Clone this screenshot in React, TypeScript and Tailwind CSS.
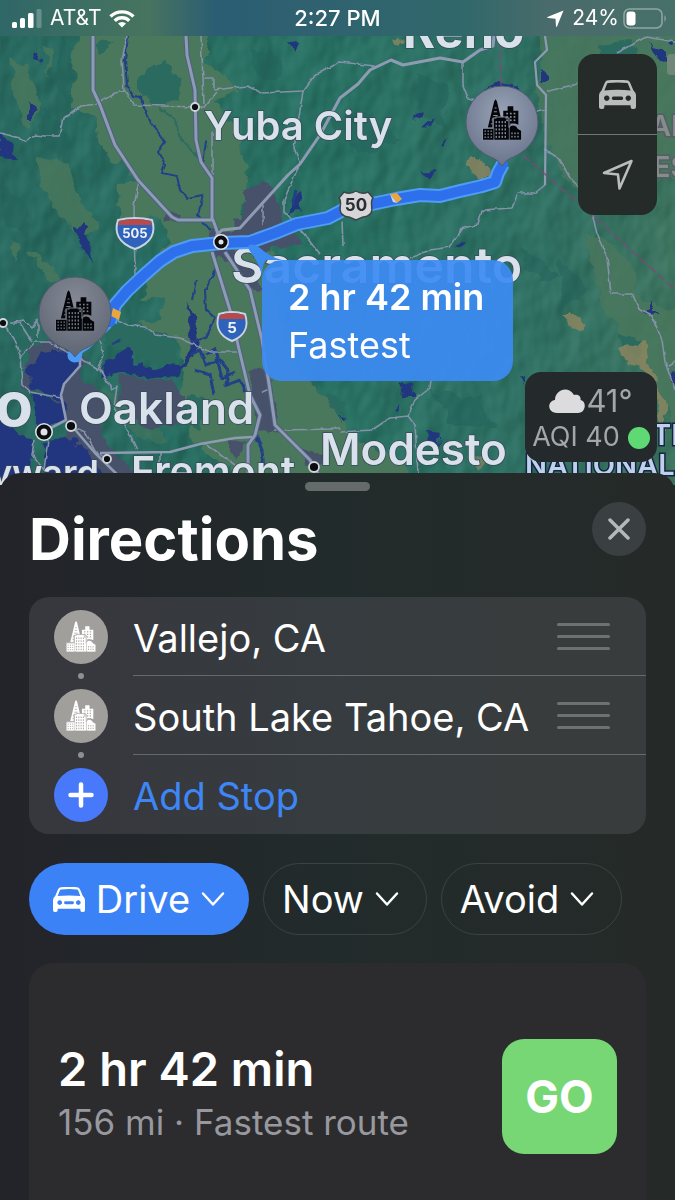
import React from "react";

type IconProps = { className?: string };

const WINDOWS: [number, number, number, number][] = [];
for (let r = 0; r < 5; r++) for (let c = 0; c < 4; c++) WINDOWS.push([39 + c * 9, 63 + r * 11, 4, 6]);
for (let r = 0; r < 3; r++) for (let c = 0; c < 3; c++) WINDOWS.push([6 + c * 9, 91 + r * 9, 4, 4]);
for (let r = 0; r < 2; r++) for (let c = 0; c < 3; c++) WINDOWS.push([86 + c * 9, 97 + r * 10, 4, 5]);
for (let r = 0; r < 3; r++) for (let c = 0; c < 3; c++) WINDOWS.push([71 + c * 11, 38 + r * 10, 5, 5]);

function CityShapes({ ink, gap }: { ink: string; gap: string }) {
  return (
    <g>
      <path d="M35 4 L39 -2 L43 4 L55 54 L30 54 L30 82 L16 82 Z" fill={ink} />
      <path d="M36 24h6M34 35h9M32 46h13M27 60h4M25 71h5" stroke={gap} strokeWidth="3" />
      <path d="M62 32h13V19h17v13h15v42l-10-4h-14v12h-21z" fill={ink} />
      <path d="M0 84h32V54h8v-3h30v3h9v28c5-12 24-9 27 3l11 6v29H0z" fill={ink} stroke={gap} strokeWidth="3" />
      <path d="M34 84v36M80 80v40" stroke={gap} strokeWidth="2" />
      {WINDOWS.map(([x, y, w, h], i) => (
        <rect key={i} x={x} y={y} width={w} height={h} fill={gap} />
      ))}
    </g>
  );
}

function Car({ className }: IconProps) {
  return (
    <svg viewBox="0 0 110 86" className={className} fill="currentColor" fillRule="evenodd" aria-hidden="true">
      <path d="M26 1 Q55 -3 84 1 Q90 2 93 9 L102 30 Q110 37 110 46 V80 Q110 86 104 86 H100 Q94 86 94 80 V75 H16 V80 Q16 86 10 86 H6 Q0 86 0 80 V46 Q0 37 8 30 L17 9 Q20 2 26 1Z M28 9 Q24 9 23 13 L16 31 Q55 27 94 31 L87 13 Q86 9 82 9 Q55 5 28 9Z M23 46 a8 8 0 1 0 .1 0Z M87 46 a8 8 0 1 0 .1 0Z M43 49 Q38 49 38 54 Q38 59 43 59 H67 Q72 59 72 54 Q72 49 67 49Z" />
    </svg>
  );
}

function Chevron() {
  return (
    <svg viewBox="0 0 24 16" className="h-4 w-6" fill="none" stroke="currentColor" strokeWidth="2.500" strokeLinecap="round" strokeLinejoin="round" aria-hidden="true">
      <path d="M2 2.500 L12 13.500 L22 2.500" />
    </svg>
  );
}

function Pin({ x, y, id, gap }: { x: number; y: number; id: string; gap: string }) {
  return (
    <g transform={`translate(${x} ${y})`}>
      <path d="M-36 0 A36 36 0 1 1 36 0 C36 19 22 31 9 36 Q4 38 0 44 Q-4 38 -9 36 C-22 31 -36 19 -36 0Z" fill={`url(#${id})`} stroke="#4f5b70" strokeWidth="1" />
      <g transform="translate(-19.500 -22) scale(0.335)">
        <CityShapes ink="#050609" gap={gap} />
      </g>
    </g>
  );
}

function Town({ x, y, r }: { x: number; y: number; r: number }) {
  return <circle cx={x} cy={y} r={r} fill="#0b0d10" stroke="#cfd5d8" strokeWidth="1.800" />;
}

const ROUTE =
  "M110 322 L115 305 L127 291 L143 276 L160 261 L174 252 L192 246 L221 243 L250 242 L275 233 L297 224 L328 218 L345 209 L372 204 L396 199 L420 195 L440 196 L460 191 L482 186 L495 182 L498 173 L503 164";

function MapDrawing() {
  return (
    <svg viewBox="0 0 675 485" preserveAspectRatio="xMidYMin slice" className="absolute inset-0 h-full w-full" role="img" aria-label="Map of the route from Vallejo to South Lake Tahoe" fontFamily="Inter, 'Liberation Sans', sans-serif">
      <defs>
        <filter id="edge" x="-5%" y="-5%" width="110%" height="110%">
          <feTurbulence type="fractalNoise" baseFrequency="0.06" numOctaves="3" seed="4" result="n" />
          <feDisplacementMap in="SourceGraphic" in2="n" scale="15" xChannelSelector="R" yChannelSelector="G" />
        </filter>
        <filter id="wobble" x="-5%" y="-5%" width="110%" height="110%">
          <feTurbulence type="fractalNoise" baseFrequency="0.12" numOctaves="2" seed="9" result="n" />
          <feDisplacementMap in="SourceGraphic" in2="n" scale="4" xChannelSelector="R" yChannelSelector="G" />
        </filter>
        <filter id="relief" x="0" y="0" width="100%" height="100%" colorInterpolationFilters="sRGB">
          <feTurbulence type="fractalNoise" baseFrequency="0.03 0.02" numOctaves="3" seed="12" />
          <feDiffuseLighting surfaceScale="6" lightingColor="#ffffff">
            <feDistantLight azimuth="220" elevation="28" />
          </feDiffuseLighting>
        </filter>
        <linearGradient id="land" x1="0" x2="1">
          <stop offset="0" stopColor="#296a60" />
          <stop offset="0.5" stopColor="#297264" />
          <stop offset="0.8" stopColor="#307164" />
          <stop offset="1" stopColor="#3d7560" />
        </linearGradient>
        <radialGradient id="pinA" cx="0.5" cy="0.3" r="0.7">
          <stop offset="0" stopColor="#848995" />
          <stop offset="1" stopColor="#5f6673" />
        </radialGradient>
        <radialGradient id="pinB" cx="0.5" cy="0.35" r="0.7">
          <stop offset="0" stopColor="#9aa4b8" />
          <stop offset="1" stopColor="#667087" />
        </radialGradient>
      </defs>

      <rect width="675" height="485" fill="url(#land)" />
      <rect width="675" height="485" filter="url(#relief)" style={{ mixBlendMode: "soft-light" }} opacity="0.25" />

      <g filter="url(#edge)">
        <g fill="#4a785c">
          <path d="M78 20 L75 70 L73 108 L95 117 L101 145 L112 164 L126 158 L136 180 L116 184 L120 218 L146 224 L150 214 L162 220 L170 240 L158 262 L145 285 L140 300 L165 296 L160 320 L135 324 L180 345 L185 372 L180 395 L190 440 L250 480 L420 485 L392 455 L350 440 L338 405 L300 375 L278 315 L276 262 L240 215 L246 195 L250 168 L238 157 L241 140 L226 118 L216 100 L234 92 L228 76 L204 62 L214 20Z" />
          <path d="M545 20 L535 90 L548 145 L575 190 L590 200 L595 175 L680 180 L680 20Z" fillOpacity="0.8" />
          <path d="M588 230 L630 260 L640 300 L680 310 L680 430 L660 400 L625 340 L600 300Z" fillOpacity="0.8" />
          <path d="M8 60 L25 62 L40 100 L30 130 L20 120Z M35 155 L68 165 L80 200 L98 225 L85 240 L60 215 L40 185Z M30 250 L48 262 L62 285 L50 282Z M10 240 L20 250 L14 260Z M44 45 L52 50 L50 80Z" fillOpacity="0.8" />
          <path d="M100 385 L130 400 L170 440 L140 440Z M85 440 L110 470 L80 455Z" fillOpacity="0.5" />
        </g>
        <g fill="#2a6b5f">
          <path d="M142 72 L165 58 L180 82 L177 102 L155 104 L138 90Z M96 45 L112 42 L106 54 L96 54Z" />
          <path d="M108 325 L140 328 L165 332 L180 345 L172 365 L140 355 L105 345Z" />
          <path d="M190 395 L212 400 L200 430 L175 425Z M325 390 L345 400 L340 425Z" />
          <path d="M600 60 L620 75 L640 58 L630 42 L600 46Z M620 330 L640 345 L635 360 L622 345Z" />
        </g>
        <g fill="#245f5a" fillOpacity="0.5">
          <path d="M45 110 L70 140 L60 160 L40 140Z M0 180 L22 200 L30 235 L8 225Z M60 40 L75 50 L66 100 L55 80Z" />
          <path d="M250 45 L285 60 L275 85 L255 75Z M330 120 L370 112 L400 140 L360 155Z M420 70 L450 90 L440 130 L415 110Z M380 300 L400 330 L390 370Z M560 260 L590 290 L560 310Z M520 250 L560 275 L540 285Z M430 390 L480 400 L500 430 L450 420Z" />
        </g>
        <g fill="#47516a">
          <path d="M245 190 L262 178 L275 192 L280 215 L300 240 L280 250 L250 250 L234 242 L232 222 L245 215Z" />
          <path d="M165 214 L180 216 L178 226 L166 222Z M212 228 L235 232 L236 262 L215 258Z M232 255 L255 262 L262 290 L246 285Z" />
          <path d="M120 375 L170 380 L186 395 L182 420 L150 430 L118 400Z M30 345 L60 340 L85 355 L80 380 L110 400 L100 440 L140 480 L100 485 L68 440 L60 400 L25 388Z" />
          <path d="M250 370 L268 375 L272 395 L280 430 L260 432Z M228 440 L245 442 L240 458 L228 455Z M300 445 L325 455 L320 475 L300 462Z" />
        </g>
        <g fill="#94875f">
          <path d="M466 165 L475 156 L485 164 L490 176 L478 178Z M562 313 L572 313 L588 323 L584 331 L568 327Z M618 350 L645 342 L648 365 L665 400 L665 440 L652 385 L640 372Z M395 36 L405 40 L398 46Z" fillOpacity="0.75" />
          <path d="M470 450 L485 462 L480 470Z" fillOpacity="0.6" />
        </g>
      </g>

      <g filter="url(#edge)" fill="#20367f">
        <path d="M40 352 L66 350 L82 362 L64 382 L62 398 L45 394 L34 390 L28 370Z M32 395 L62 400 L66 418 L40 430Z M-10 405 L14 430 L34 440 L30 468 L52 500 L-10 500Z M48 440 L68 438 L90 452 L112 500 L42 500Z" />
        <path d="M100 368 L118 358 L126 346 L134 352 L132 364 L155 368 L168 364 L180 366 L192 346 L186 320 L190 300 L196 322 L198 345 L190 362 L178 378 L150 376 L120 372 L104 378Z" />
        <path d="M73 225 L82 222 L88 240 L94 262 L82 248Z M27 102 L33 102 L32 120 L27 120Z M0 132 L12 150 L20 158 L0 156Z M34 54 L40 56 L38 66 L33 62Z M288 37 L302 40 L294 50Z M294 194 L300 192 L304 210 L290 214Z" />
        <path d="M486 88 L498 80 L514 82 L518 90Z M538 68 L546 72 L546 86 L538 84Z M650 44 L665 52 L672 64 L660 60Z M668 38 L675 40 L672 44Z M412 116 L424 110 L420 118Z M425 126 L434 120 L430 128Z M440 145 L450 138 L446 146Z M420 172 L436 170 L428 176Z" />
        <path d="M398 382 L412 386 L416 396 L404 396Z M428 430 L438 432 L440 448 L430 440Z M455 248 L466 242 L462 250Z M646 312 L654 302 L654 314Z M392 410 L398 406 L396 414Z M338 418 L348 418 L344 422Z M521 378 L526 376 L526 384Z M668 374 L680 372 L676 384Z" />
      </g>

      <g fill="none" stroke="#223f88" strokeWidth="2" filter="url(#wobble)">
        <path d="M128 36 L125 60 L127 85 L133 96 L141 97 L143 108 L150 122 L158 132 L165 142 L158 152 L165 165 L162 173 L177 176 L180 190 L187 198 L203 195 L198 215 L210 230" />
        <path d="M206 140 L203 165 M196 280 L192 300 M216 262 L214 275 L205 290 L206 310 L215 318 L206 338 L190 342" />
        <path d="M190 355 L200 350 L205 365 L220 360 L228 370 L226 385 L240 380 L246 392 M195 370 L210 375 L214 395 M205 355 L215 350 L222 378 L235 372 M256 435 L262 450 L264 470 M112 345 L120 340 M296 190 L292 205" strokeWidth="3" />
        <path d="M160 108 L175 120 L180 138 L200 160" stroke="#2e6b61" />
      </g>

      <g fill="none" stroke="#8491a8" strokeWidth="1.600" strokeLinejoin="round" filter="url(#wobble)">
        <path d="M127 36 L122 60 L124 90 L134 105 L195 107 L205 107 L217 92" />
        <path d="M0 133 L20 138 L27 142 L35 135 L45 136 L60 136 L64 118 L80 106 L97 104 L115 93 L125 91" />
        <path d="M201 36 L203 78 L204 104 M203 78 L214 78 L214 90 L247 86 L262 93 L303 91 L314 76 L340 62 L375 66" />
        <path d="M303 91 L300 110 L294 148 L300 163 L284 200 L284 212 L305 235 L320 255 M263 205 L263 225 M212 130 L212 180" />
        <path d="M463 62 L463 85 L468 98 L476 100 M342 222 L343 245 M536 112 L546 110" />
        <path d="M546 92 L560 88 L578 84 M616 53 L646 37 L675 42 M545 150 L560 160 L570 178 L580 188" />
        <path d="M592 212 L597 235 L607 257 L611 294 L632 294 L640 310 L652 316 L662 340 L665 362 L675 390 M668 366 L675 362" />
        <path d="M545 185 L535 193 L518 193 L512 208 L482 210 L478 225 L463 228 L450 247 L430 250 L410 258" />
        <path d="M431 380 L430 388 L415 400 L408 416 L390 418 L372 430 L340 432 M408 416 L415 425 L418 473" />
        <path d="M139 180 L134 205 L135 280 M80 358 L100 370 L112 390 L117 386 L114 408 L125 425 L137 450 M100 340 L104 355 L98 370" />
        <path d="M3 323 L15 340 L20 355 L22 385 L30 392 L62 398 M20 358 L35 342 L50 342 L72 355 M10 323 L20 323 L32 342 M14 322 L24 320 L32 328 L38 320 L38 338" />
        <path d="M72 426 L85 432 L95 450 L107 460 M275 430 L340 429 M205 443 L235 465 M160 452 L160 473 M34 440 L32 455 L44 470 L48 440 M262 392 L272 388 M118 320 L128 325 L145 327 L155 335 L180 338 L210 352 L240 352" />
      </g>
      <g fill="none" stroke="#4f6182" strokeWidth="5" strokeLinejoin="round">
        <path d="M93 36 L93 90 L100 105 L115 145 L138 180 L172 217 L178 220 L213 220 L221 242 M186 36 L187 55 L195 90 L196 140 L201 162 L212 178 L212 220 M212 252 L230 310 L238 345 L250 395 L260 415 L255 435 L248 445 L248 476 M225 252 L250 290 L262 340 L270 390 L275 425 L310 460 L325 485" />
      </g>
      <g fill="none" stroke="#8f9bb3" strokeWidth="3" strokeLinejoin="round">
        <path d="M93 36 L93 90 L100 105 L115 145 L138 180 L172 217 L178 220 L213 220 L221 242" />
        <path d="M186 36 L187 55 L195 90 L196 140 L201 162 L212 178 L212 220" />
        <path d="M494 36 L493 46 L480 50 L463 62 L440 58 L403 65 L391 60 L370 70 L358 84 L340 98 L320 135 L300 164 L288 175 L240 228 L222 230 L216 236" />
        <path d="M545 36 L547 50 L535 62 L537 85 L546 95 L545 185" strokeWidth="2.200" />
        <path d="M212 252 L230 310 L238 345 L250 395 L260 415 L255 435 L248 445 L248 476 M225 252 L250 290 L262 340 L270 390 L275 425 L310 460 L325 485" />
        <path d="M80 356 L80 366 L64 384 L61 395 L66 420 L45 431 M72 426 L95 453 L128 485 M100 453 L170 452 L200 444 L235 438 L252 437" strokeWidth="2.600" />
      </g>
      <g fill="none" stroke="#7a4a72" strokeWidth="2" strokeOpacity="0.7" strokeDasharray="9 3">
        <path d="M500 40 L501 90 M523 155 L578 203 L620 240 L675 290" />
      </g>

      <g fill="#d9e1ea" stroke="#37475c" strokeWidth="1.500" paintOrder="stroke" fontWeight="600">
        <text x="403" y="48" fontSize="49" fontWeight="700">Reno</text>
        <text x="204" y="140" fontSize="40">Yuba City</text>
        <text x="231" y="283" fontSize="50">Sacramento</text>
        <text x="79" y="424" fontSize="44">Oakland</text>
        <text x="320" y="465" fontSize="44">Modesto</text>
        <text x="131" y="486" fontSize="41">Fremont</text>
        <text x="99" y="486" fontSize="36" textAnchor="end">Hayward</text>
        <text x="33" y="426" fontSize="62" fontWeight="700" textAnchor="end">San Francisco</text>
      </g>
      <g fontSize="29" fontWeight="600" strokeWidth="3" paintOrder="stroke">
        <g fill="#858c8a" stroke="#565c68">
          <rect x="667" y="54" width="14" height="21" rx="4" stroke="none" fill="#71877a" />
          <text x="650" y="136">AL</text>
          <text x="653" y="177">ES</text>
        </g>
        <g fill="#bfd0ee" stroke="#14243f">
          <text x="652" y="445">TI</text>
          <text x="525" y="475">NATIONAL</text>
        </g>
      </g>

      <g fill="none" strokeLinejoin="round" strokeLinecap="round">
        <path d="M72 352 Q69 358 75 359 Q79 359 79 351 L88 345 L108 326 L115 308" stroke="#4a9af5" strokeWidth="7" />
        <path d={ROUTE} stroke="#4f9df7" strokeWidth="14" strokeLinecap="butt" />
        <path d={ROUTE} stroke="#2e70ec" strokeWidth="10" />
      </g>
      <path d="M113 308 L121 312 L119 320 L111 316Z M390 194 L397 193 L402 199 L397 203Z" fill="#e8a63e" />
      <path d="M390 194 L397 203 L393 202Z" fill="#d6dbe6" />

      <Town x={195} y={107} r={4} />
      <Town x={3} y={323} r={4} />
      <Town x={71} y={426} r={5} />
      <Town x={107} y={459} r={4} />
      <Town x={314} y={467} r={5} />
      <g>
        <circle cx="221" cy="242" r="8" fill="#dfe3e6" />
        <circle cx="221" cy="242" r="4.500" fill="none" stroke="#0b0d10" strokeWidth="4" />
        <circle cx="44" cy="432" r="9" fill="#dfe3e6" />
        <circle cx="44" cy="432" r="5.500" fill="none" stroke="#0b0d10" strokeWidth="4" />
      </g>

      <g textAnchor="middle" fontWeight="700">
        <path d="M118 220 Q135 216 152 220 C156 232 152 243 135 249 C118 243 114 232 118 220Z" fill="#2f62ba" stroke="#c9d3e3" strokeWidth="2" />
        <path d="M119 221 Q135 217 151 221 L152 225 H118Z" fill="#b94a4a" />
        <text x="135" y="238" fontSize="13" fill="#eef2f8">505</text>
        <path d="M219 314 Q232 310 245 314 C249 326 245 336 232 341 C219 336 215 326 219 314Z" fill="#2f62ba" stroke="#c9d3e3" strokeWidth="2" />
        <path d="M220 315 Q232 311 244 315 L245 319 H219Z" fill="#b94a4a" />
        <text x="232" y="333" fontSize="15" fill="#eef2f8">5</text>
        <path d="M344 192 Q350 195 356 191 Q362 195 368 192 L373 198 C369 203 374 208 371 213 Q368 217 363 217 L356 220 L349 217 Q344 217 341 213 C338 208 343 203 339 198Z" fill="#d6d6d8" stroke="#3c4449" strokeWidth="1.500" />
        <text x="356" y="211" fontSize="17" fill="#2b2d33">50</text>
      </g>

      <Pin x={75} y={313} id="pinA" gap="#777d89" />
      <Pin x={502} y={122} id="pinB" gap="#8a93a6" />
    </svg>
  );
}

function StatusBar() {
  return (
    <header className="relative z-10 grid h-9 grid-cols-3 items-center bg-[linear-gradient(90deg,#2f6767_0%,#47745f_22%,#2b5d74_32%,#2f6170_45%,#30686a_68%,#4a6b6b_82%,#47706a_100%)] px-3 text-[21px] leading-6 text-white">
      <div className="flex items-center gap-2">
        <svg viewBox="0 0 30 19" className="h-[19px] w-[30px]" fill="#fff" aria-hidden="true">
          <rect x="0" y="13" width="5" height="6" rx="1.500" />
          <rect x="8" y="9" width="5" height="10" rx="1.500" />
          <rect x="16" y="4" width="5.500" height="15" rx="1.500" />
          <rect x="24.500" y="0" width="5" height="19" rx="1.500" opacity="0.25" />
        </svg>
        <span>AT&amp;T</span>
        <svg viewBox="0 0 26 19" className="h-[19px] w-[26px]" fill="none" stroke="#fff" strokeWidth="3.400" aria-hidden="true">
          <path d="M1.500 7.500 A16.500 16.500 0 0 1 24.500 7.500" />
          <path d="M5.700 11.700 A10.500 10.500 0 0 1 20.300 11.700" />
          <path d="M13 18.500 L9 14.600 A5.800 5.800 0 0 1 17 14.600Z" fill="#fff" stroke="none" />
        </svg>
      </div>
      <time className="text-center text-[22px] font-medium">2:27 PM</time>
      <div className="-mr-1 flex items-center justify-end gap-2">
        <svg viewBox="0 0 17 17" className="h-[17px] w-[17px]" fill="#fff" aria-hidden="true">
          <path d="M16.500 .5 L10 16.500 Q9 17.500 9 16 L8.500 8.700 L1 8 Q-.5 7.500 1 6.800Z" />
        </svg>
        <span className="flex items-center gap-1">
          24%
          <svg viewBox="0 0 44 21" className="h-[21px] w-11" aria-hidden="true">
            <rect x="1" y="1" width="38" height="19" rx="5.500" fill="none" stroke="#a9bbb4" strokeOpacity="0.75" strokeWidth="1.500" />
            <rect x="3.500" y="3.500" width="9" height="14" rx="3" fill="#fff" />
            <path d="M41.500 7 Q44 10.500 41.500 14Z" fill="#a9bbb4" fillOpacity="0.8" />
          </svg>
        </span>
      </div>
    </header>
  );
}

function MapControls() {
  return (
    <div className="absolute top-[54px] right-[18px] flex w-[79px] flex-col divide-y divide-[#707875] overflow-hidden rounded-2xl bg-[#242b29] text-[#b9bdbb]">
      <button type="button" aria-label="Map mode" className="flex h-[81px] items-center justify-center">
        <Car className="h-[29px] w-[37px]" />
      </button>
      <button type="button" aria-label="Show my location" className="flex h-20 items-center justify-center">
        <svg viewBox="0 0 32 32" className="h-8 w-8" fill="none" stroke="currentColor" strokeWidth="2.600" strokeLinejoin="round" aria-hidden="true">
          <path d="M29.500 2 L17.500 29.500 L16 15.500 L2 14Z" />
        </svg>
      </button>
    </div>
  );
}

function Weather() {
  return (
    <div className="absolute top-[372px] right-[18px] flex h-[90px] w-[132px] flex-col items-center justify-center rounded-2xl bg-[#24292b] pt-1 text-[#a3a7a8]">
      <div className="flex h-[37px] items-center gap-px text-[31px] leading-9">
        <svg viewBox="0 0 36 24" className="h-6 w-9" fill="#dcdcdf" aria-hidden="true">
          <path d="M8 24 C-2 24 -2 12 6 11 C6 1 19 -4 25 6 C31 5 32 9 31.500 11 C38 12 37 24 29 24Z" />
        </svg>
        <span>41°</span>
      </div>
      <div className="flex h-[37px] items-center gap-2 text-[27px] whitespace-nowrap">
        <span>AQI 40</span>
        <span className="h-[22px] w-[22px] rounded-full bg-[#5fd974]" />
      </div>
    </div>
  );
}

function RouteCallout() {
  return (
    <div className="absolute top-[260px] left-[262px] h-[121px] w-[251px] rounded-[20px] bg-[#3c8bf3]/92 px-[26px] pt-[13px] text-[36px] leading-[48px] whitespace-nowrap text-white">
      <svg viewBox="0 0 40 44" className="absolute -top-[16px] -left-[14px] h-11 w-10" aria-hidden="true">
        <path d="M1 1 Q6 -1 12 4 Q22 13 34 16 H18 Q14 20 14 34 Q13 22 4 10 Q-1 4 1 1Z" fill="#3c8bf3" />
      </svg>
      <p className="font-semibold">2 hr 42 min</p>
      <p>Fastest</p>
    </div>
  );
}

function StopBadge() {
  return (
    <span className="flex h-[54px] w-[54px] items-center justify-center rounded-full bg-[#a09f9b]">
      <svg viewBox="0 -2 117 122" className="h-[31px] w-[30px]" aria-hidden="true">
        <CityShapes ink="#ffffff" gap="#a8a7a3" />
      </svg>
    </span>
  );
}

function Stop({ name }: { name: string }) {
  return (
    <li className="relative flex h-[79px] gap-[25px] pl-[25px]">
      <span className="flex items-center">
        <StopBadge />
      </span>
      <span className="absolute -bottom-[3px] left-[49px] h-[6px] w-[6px] rounded-full bg-[#8b9193]" />
      <div className="flex min-w-0 flex-1 items-center justify-between border-b border-[#626a6c] pr-9">
        <span className="pt-1 whitespace-nowrap">{name}</span>
        <button type="button" aria-label={`Reorder ${name}`} className="flex w-[53px] flex-col gap-[9px]">
          <span className="h-[3px] rounded-full bg-[#6c7274]" />
          <span className="h-[3px] rounded-full bg-[#6c7274]" />
          <span className="h-[3px] rounded-full bg-[#6c7274]" />
        </button>
      </div>
    </li>
  );
}

export default function App() {
  return (
    <div className="flex min-h-screen flex-col bg-[#232628] font-['Inter','Liberation_Sans',sans-serif] text-white">
      <div className="relative h-[485px] overflow-hidden">
        <MapDrawing />
        <StatusBar />
        <RouteCallout />
        <MapControls />
        <Weather />
      </div>

      <main className="relative -mt-3 flex flex-1 flex-col rounded-t-[20px] bg-linear-to-r from-[#23242a] via-[#222b2b] to-[#252a28] px-[29px] pt-[9px]">
        <div className="h-[9px] w-[65px] self-center rounded-full bg-[#656b6a]" />
        <div className="flex items-start justify-between pt-[11px]">
          <h1 className="pt-[3px] text-[58px] leading-[68px] font-bold">Directions</h1>
          <button type="button" aria-label="Close" className="flex h-[54px] w-[54px] items-center justify-center rounded-full bg-[#3a3f41]">
            <svg viewBox="0 0 22 22" className="h-[22px] w-[22px]" stroke="#b3b9bb" strokeWidth="3.500" strokeLinecap="round" aria-hidden="true">
              <path d="M2 2 L20 20 M20 2 L2 20" />
            </svg>
          </button>
        </div>

        <ul className="mt-6 overflow-hidden rounded-[20px] bg-linear-to-r from-[#37373e] via-[#363c3f] to-[#393c3c] text-[38px]">
          <Stop name="Vallejo, CA" />
          <Stop name="South Lake Tahoe, CA" />
          <li>
            <button type="button" className="flex h-[79px] w-full items-center gap-[25px] pl-[25px] text-[#3e86f5]">
              <span className="flex h-[54px] w-[54px] items-center justify-center rounded-full bg-[#4879fb]">
                <svg viewBox="0 0 26 26" className="h-[26px] w-[26px]" stroke="#fff" strokeWidth="4.500" strokeLinecap="round" aria-hidden="true">
                  <path d="M13 2.500 V23.500 M2.500 13 H23.500" />
                </svg>
              </span>
              <span className="pt-1">Add Stop</span>
            </button>
          </li>
        </ul>

        <div className="mt-[29px] flex gap-[14px] text-[38px] whitespace-nowrap">
          <button type="button" className="flex h-[72px] w-[220px] items-center justify-center gap-[11px] rounded-full bg-[#3b82f7]">
            <Car className="h-[25px] w-8" />
            Drive
            <Chevron />
          </button>
          <button type="button" className="flex h-[72px] w-[164px] items-center justify-center gap-[11px] rounded-full border border-[#3b4242] pr-[9px]">
            Now
            <Chevron />
          </button>
          <button type="button" className="flex h-[72px] w-[181px] items-center justify-center gap-[11px] rounded-full border border-[#3b4242] pr-[9px]">
            Avoid
            <Chevron />
          </button>
        </div>

        <section className="mt-7 flex flex-1 items-start justify-between rounded-t-[24px] bg-[#2c2c2e] px-[29px] pt-[76px]">
          <div className="whitespace-nowrap">
            <h2 className="text-[47px] leading-[60px] font-semibold">2 hr 42 min</h2>
            <p className="text-[35px] leading-[46px] text-[#98989f]">156 mi · Fastest route</p>
          </div>
          <button type="button" className="h-[115px] w-[115px] rounded-[22px] bg-[#77d774] text-[45px] font-bold">
            GO
          </button>
        </section>
      </main>
    </div>
  );
}
